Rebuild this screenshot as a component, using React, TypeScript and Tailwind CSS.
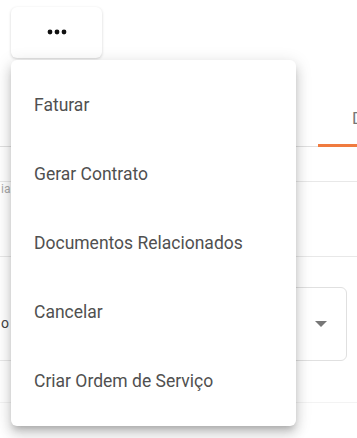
import { FC } from "react"

const menuItems = [
    "Faturar",
    "Gerar Contrato",
    "Documentos Relacionados",
    "Cancelar",
    "Criar Ordem de Serviço",
]

const MoreIcon: FC = () => (
    <svg width="20" height="6" viewBox="0 0 20 6">
        <circle cx="3" cy="3" r="2.4" fill="#111" />
        <circle cx="10" cy="3" r="2.4" fill="#111" />
        <circle cx="17" cy="3" r="2.4" fill="#111" />
    </svg>
)

const App: FC = () => {
    return (
        <div className="relative w-[357px] h-[438px] overflow-hidden bg-white font-['Roboto','Liberation_Sans',sans-serif]">
            {/* pagina por tras do menu */}
            <div className="flex flex-col">
                <div className="h-[147px] flex justify-end border-b border-[#e0e0e0] pt-[7px]">
                    <div className="w-[39px] flex flex-col justify-end">
                        <div className="h-[40px] flex items-start overflow-hidden pl-[34px] text-[17px] leading-[24px] text-[#777] pt-[2px]">
                            Dados
                        </div>
                        <div className="h-[3px] bg-[#f07b3f] mb-[-1px]" />
                    </div>
                </div>
                <div className="h-[35px] border-b border-[#e8e8e8]" />
                <div className="h-[75px] border-b border-[#e8e8e8] text-[12px] text-[#aaa] leading-[14px] overflow-hidden">
                    <span className="block ml-[1px]">ia</span>
                </div>
                <div className="flex gap-4 mt-[30px]">
                    <div className="w-[150px] h-[74px] border-b border-[#e8e8e8] flex items-center text-[14px] text-[#444]">
                        <span className="ml-[1px]">o</span>
                    </div>
                    <div className="flex-1 mr-[10px] h-[74px] rounded-[6px] border border-[#e0e0e0] flex items-center justify-end pr-[19px]">
                        <svg width="12" height="6" viewBox="0 0 12 6">
                            <path d="M0 0 L12 0 L6 6 Z" fill="#777" />
                        </svg>
                    </div>
                </div>
                <div className="h-[42px] border-b border-[#f3f3f3]" />
            </div>

            {/* botao de acoes */}
            <div className="absolute left-[11px] top-[7px] w-[91px] h-[51px] rounded-[6px] bg-white shadow-[0_1px_3px_rgba(0,0,0,0.18)] flex items-center justify-center pb-[1px]">
                <MoreIcon />
            </div>

            {/* menu */}
            <div className="absolute left-[11px] top-[60px] w-[285px] rounded-[6px] bg-white py-[11px] shadow-[0_5px_6px_-3px_rgba(0,0,0,0.2),0_8px_12px_1px_rgba(0,0,0,0.12),0_3px_16px_2px_rgba(0,0,0,0.1)]">
                {menuItems.map(item => (
                    <div
                        key={item}
                        className="h-[68.8px] flex items-center pl-[23px] text-[17.5px] leading-[24px] text-[#505050]"
                    >
                        {item}
                    </div>
                ))}
            </div>
        </div>
    )
}

export default App
